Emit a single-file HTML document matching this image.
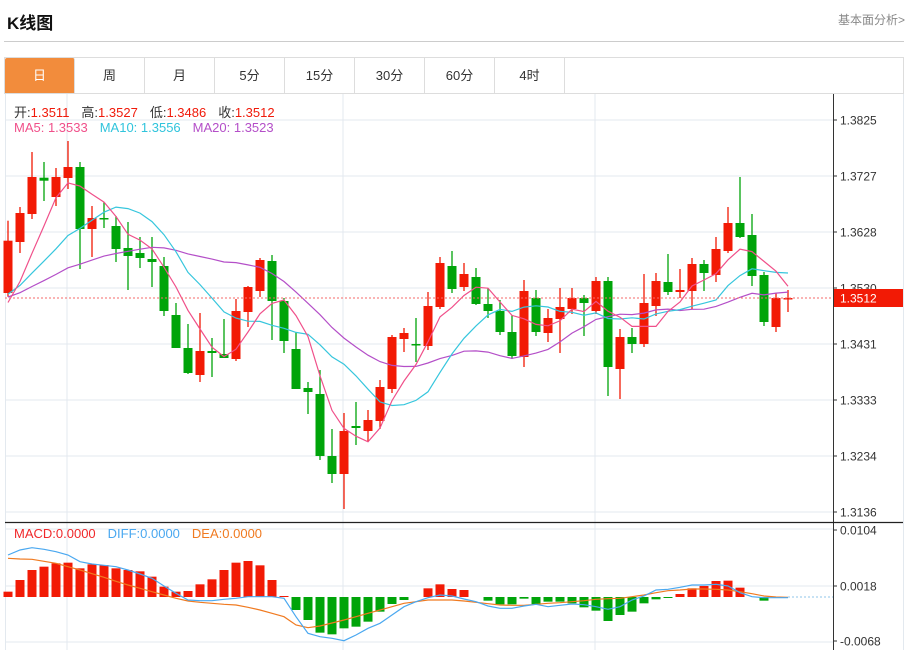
<!DOCTYPE html>
<html><head><meta charset="utf-8">
<style>
*{margin:0;padding:0;box-sizing:border-box}
body{width:910px;height:650px;background:#fff;font-family:"Liberation Sans","Noto Sans CJK SC",sans-serif;position:relative;overflow:hidden}
.t{position:absolute;white-space:nowrap}
.g{display:inline-block;width:12px}
</style></head><body>
<div class="t" style="left:7px;top:9px;font-size:17px;font-weight:bold;color:#111">K线图</div>
<div class="t" style="right:5px;top:11px;font-size:12px;color:#888">基本面分析&gt;</div>
<div style="position:absolute;left:4px;top:41px;width:900px;height:1px;background:#ccc"></div>
<div style="position:absolute;left:4px;top:57px;width:900px;height:37px;border:1px solid #ddd;border-bottom:1px solid #ddd"></div>
<div id="tabs"></div>
<svg id="s" width="910" height="650" style="position:absolute;left:0;top:0"></svg>
<div class="t" style="left:14px;top:102px;font-size:13px;color:#333">开:<span style="color:#f01a0a">1.3511</span><span class="g"></span>高:<span style="color:#f01a0a">1.3527</span><span class="g"></span>低:<span style="color:#f01a0a">1.3486</span><span class="g"></span>收:<span style="color:#f01a0a">1.3512</span></div>
<div class="t" style="left:14px;top:120px;font-size:13px"><span style="color:#f0508a">MA5: 1.3533</span><span class="g"></span><span style="color:#30c4dc">MA10: 1.3556</span><span class="g"></span><span style="color:#b44fc8">MA20: 1.3523</span></div>
<div class="t" style="left:14px;top:526px;font-size:13px"><span style="color:#f0282a">MACD:0.0000</span><span class="g"></span><span style="color:#4aa8f0">DIFF:0.0000</span><span class="g"></span><span style="color:#f07a20">DEA:0.0000</span></div>
<script>
var tabs=["日","周","月","5分","15分","30分","60分","4时"],h="";
for(var i=0;i<8;i++){h+='<div class="t" style="left:'+(5+i*70)+'px;top:58px;width:70px;height:35px;line-height:35px;text-align:center;font-size:13px;border-right:1px solid #ddd;'+(i==0?'background:#f28c3c;color:#fff;border-radius:2px 2px 0 0':'color:#333')+'">'+tabs[i]+'</div>';}
document.getElementById('tabs').innerHTML=h;
var C=[[0,1,240.7,293,220.7,296.7],[1,1,213,242,207,253],[2,1,177,214,152,219],[3,0,177.7,180.7,162,201],[4,1,177,197,168,206],[5,1,167,178,141,189],[6,0,167,229,162,269],[7,1,218,229,206,257],[8,0,218,219.5,202,228],[9,0,226,249,216,262],[10,0,248,256,222,290],[11,0,253,258,237,268],[12,0,259,262,237,287],[13,0,266,311,257,316],[14,0,315,348,303,348],[15,0,348,373,324,374],[16,1,351,375,313,382],[17,0,351,353,338,377],[18,0,354,358,319,358],[19,1,311,359,299,361],[20,1,287,312,286,327],[21,1,260,291,258,297],[22,0,261,301,255,340],[23,0,301,341,298,353],[24,0,349,389,332,389],[25,0,388,392,382,414],[26,0,394,456,370,460],[27,0,456,474,429,483],[28,1,431,474,413,509],[29,0,426,428,402,445],[30,1,420,431,410,442],[31,1,387,421,380,429],[32,1,337,389,335,393],[33,1,333,339,328,352],[34,0,344,345.5,318,362],[35,1,306,346,292,350],[36,1,263,307,257,309],[37,0,266,289,251,293],[38,1,274,287,263,291],[39,0,277,304,268,305],[40,0,304,311,288,318],[41,0,311,332,300,335],[42,0,332,356,315,359],[43,1,291,357,280,367],[44,0,298,332,290,336],[45,1,318,333,309,342],[46,1,307,319,288,353],[47,1,298,309,288,314],[48,0,298,303,295,336],[49,1,281,311,277,314],[50,0,281,367,277,396],[51,1,337,369,329,399],[52,0,337,344,328,353],[53,1,303,344,274,347],[54,1,281,306,273,316],[55,0,282,292,254,295],[56,1,290,292,269,298],[57,1,264,291,258,309],[58,0,264,273,260,291],[59,1,249,275,237,282],[60,1,223,251,207,253],[61,0,223,237,177,238],[62,0,235,276,214,286],[63,0,275,322,272,326],[64,1,298,327,293,332],[65,1,298,299.5,290,312]];
var R="#f21a05",G="#00a40a",s="";
function X(i){return 8+12*i}
[120,176,232,288,344,400,456,512,529,586,642].forEach(function(y){s+='<line x1="5" x2="833" y1="'+y+'" y2="'+y+'" stroke="#e3e9ef"/>';});
[67,343,595].forEach(function(x){s+='<line x1="'+x+'" x2="'+x+'" y1="94" y2="650" stroke="#e3e9ef"/>';});
s+='<line x1="5.5" x2="5.5" y1="94" y2="650" stroke="#e3e9ef"/>';
s+='<line x1="903.5" x2="903.5" y1="94" y2="650" stroke="#e3e9ef"/>';
var labs=[[120,"1.3825"],[176,"1.3727"],[232,"1.3628"],[288,"1.3530"],[344,"1.3431"],[400,"1.3333"],[456,"1.3234"],[512,"1.3136"],[530,"0.0104"],[586,"0.0018"],[641,"-0.0068"]];
labs.forEach(function(l){s+='<line x1="833" x2="837" y1="'+l[0]+'" y2="'+l[0]+'" stroke="#333"/><text x="840" y="'+(l[0]+4.5)+'" font-size="12" fill="#333" font-family="Liberation Sans">'+l[1]+'</text>';});
C.forEach(function(c){var x=X(c[0]),col=c[1]?R:G;s+='<line x1="'+x+'" x2="'+x+'" y1="'+c[4]+'" y2="'+c[5]+'" stroke="'+col+'" stroke-width="1.3"/>';s+='<rect x="'+(x-4.5)+'" y="'+c[2]+'" width="9" height="'+Math.max(1.5,c[3]-c[2])+'" fill="'+col+'"/>';});
var cl=C.map(function(c){return c[1]?c[2]:c[3]});
function ma(n,pre){var p=[];for(var i=0;i<cl.length;i++){var sum=0;for(var k=0;k<n;k++){var j=i-k;sum+=j>=0?cl[j]:pre;}p.push(X(i)+","+(sum/n).toFixed(1));}return p.join(" ");}
s+='<polyline points="'+ma(20,300)+'" fill="none" stroke="#b44fc8" stroke-width="1.2"/>';
s+='<polyline points="'+ma(10,300)+'" fill="none" stroke="#36c6dd" stroke-width="1.2"/>';
s+='<polyline points="'+ma(5,318)+'" fill="none" stroke="#f0508a" stroke-width="1.2"/>';
s+='<line x1="5" x2="833" y1="298" y2="298" stroke="#f56a6a" stroke-dasharray="2,2"/>';
s+='<rect x="834" y="289" width="69" height="18" fill="#f21a05"/><text x="840" y="302.5" font-size="12" fill="#fff" font-family="Liberation Sans">1.3512</text>';
s+='<line x1="833.5" x2="833.5" y1="94" y2="650" stroke="#333"/>';
s+='<line x1="5" x2="903" y1="522.5" y2="522.5" stroke="#222" stroke-width="1.3"/>';
var B=[275,240,210,200,190,188,205,193,195,205,210,214,230,260,275,273,253,238,210,188,183,196,240,288,330,360,398,403,385,380,365,335,312,300,293,265,253,267,270,290,302,313,313,296,312,305,305,310,322,332,363,345,335,310,298,294,282,265,258,243,242,263,290,302,293,293];
var Z=597;
B.forEach(function(v,i){var y=500+v/3,x=X(i);if(Math.abs(y-Z)<1)return;var col=y<Z?R:G;var t=Math.min(y,Z),hh=Math.abs(y-Z);s+='<rect x="'+(x-4.5)+'" y="'+t+'" width="9" height="'+hh+'" fill="'+col+'"/>';});
var D=[165,150,143,148,155,165,185,192,196,200,210,222,235,258,280,300,302,302,298,295,290,290,290,295,350,400,410,415,422,405,385,370,345,320,305,293,285,288,297,305,318,325,325,318,313,320,316,312,314,320,328,320,300,288,270,268,262,255,255,253,258,278,290,293,293,293];
var E=[175,177,178,184,190,200,210,221,232,244,255,265,275,285,295,303,307,310,313,315,322,330,340,350,375,383,378,369,360,350,340,330,320,310,305,300,300,300,303,307,311,315,316,316,313,310,308,305,302,298,296,295,290,285,278,272,270,267,267,268,270,275,281,288,291,292];
function pl(a,col){return '<polyline points="'+a.map(function(v,i){return X(i)+","+(500+v/3).toFixed(1)}).join(" ")+'" fill="none" stroke="'+col+'" stroke-width="1.2"/>';}
s+=pl(E,"#f07a20")+pl(D,"#4aa8f0");
s+='<line x1="'+X(65)+'" x2="833" y1="'+Z+'" y2="'+Z+'" stroke="#8fc6ea" stroke-dasharray="2,2"/>';
document.getElementById('s').innerHTML=s;
</script>
</body></html>
